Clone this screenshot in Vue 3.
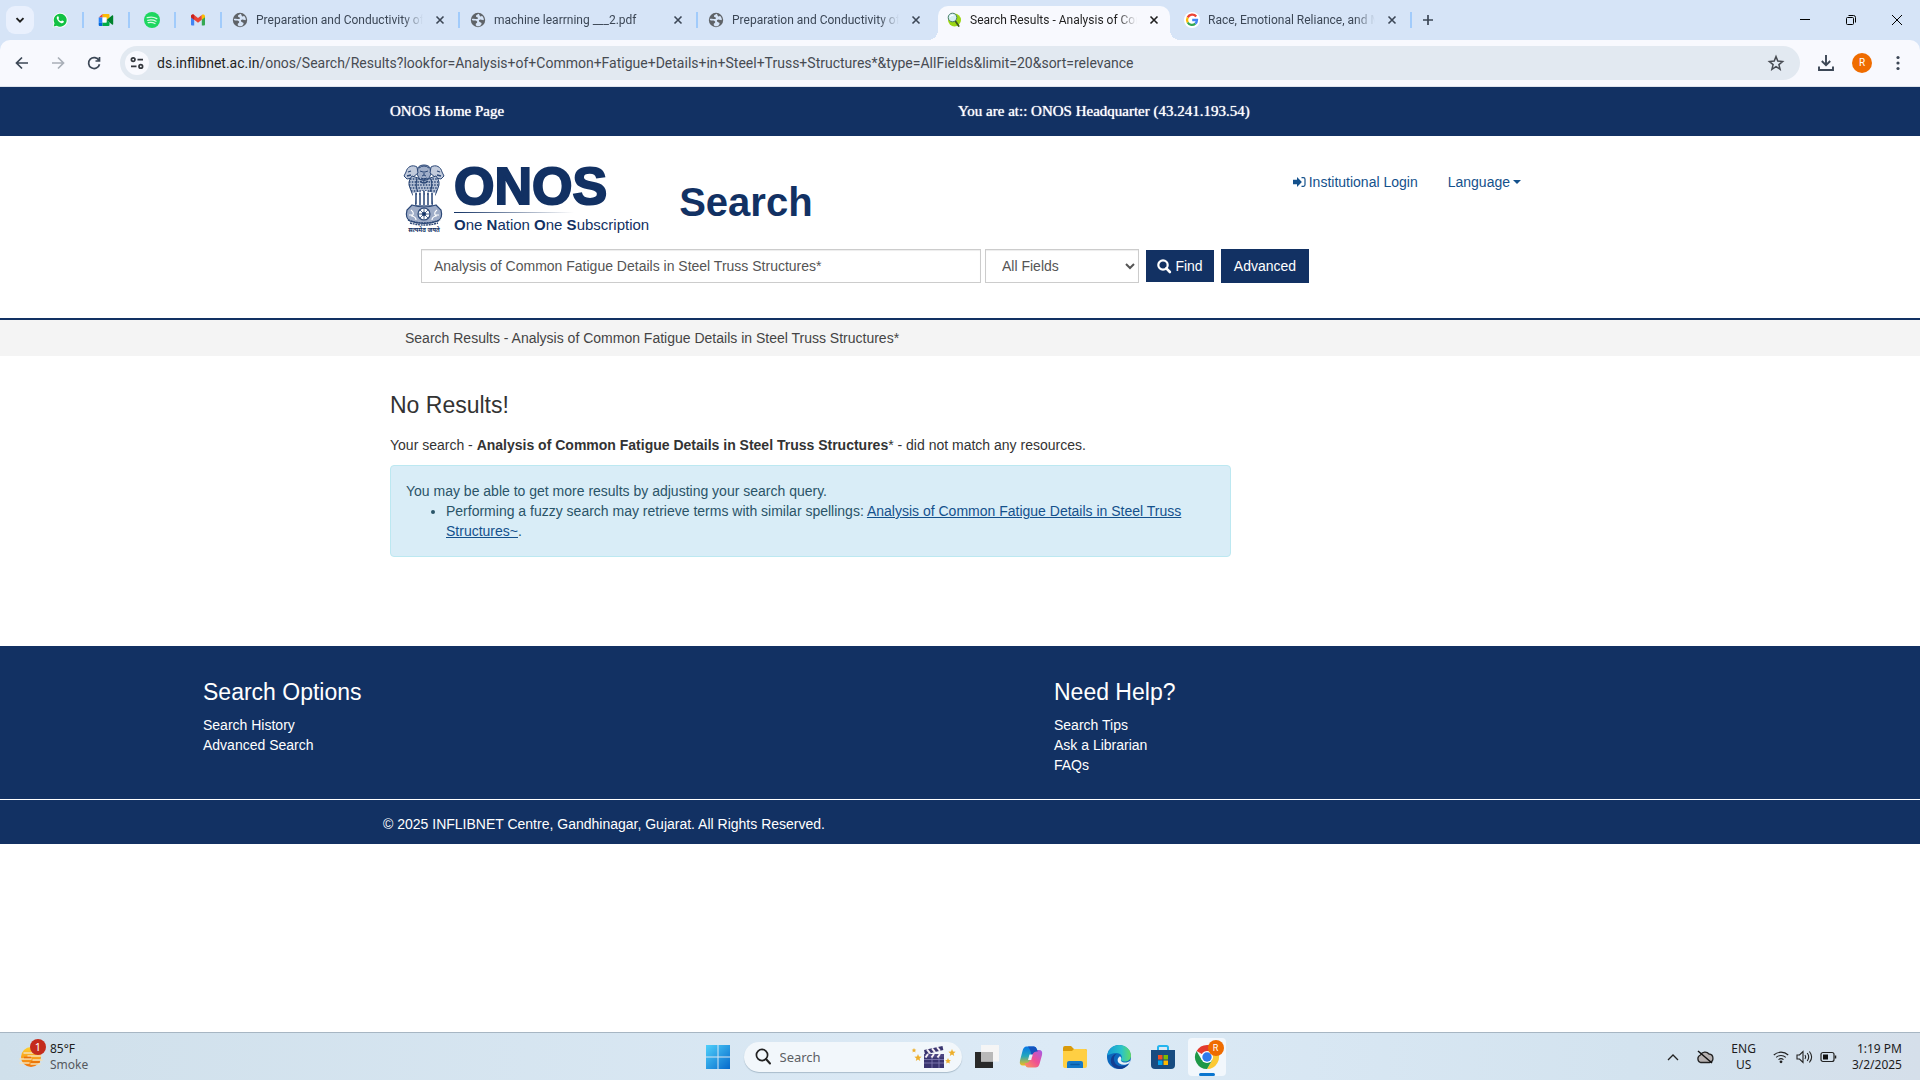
<script setup>
import { ref } from 'vue'

const query = ref('Analysis of Common Fatigue Details in Steel Truss Structures*')
const field = ref('All Fields')
const taskSearch = ref('')
const pinned = ['whatsapp', 'meet', 'spotify', 'gmail']
const tabs = [
  { icon: 'globe', title: 'Preparation and Conductivity of', sep: true },
  { icon: 'globe', title: 'machine learrning ___2.pdf', sep: true },
  { icon: 'globe', title: 'Preparation and Conductivity of', sep: false },
  { icon: 'vufind', title: 'Search Results - Analysis of Com', active: true, sep: false },
  { icon: 'google', title: 'Race, Emotional Reliance, and M', sep: true }
]
const address = '/onos/Search/Results?lookfor=Analysis+of+Common+Fatigue+Details+in+Steel+Truss+Structures*&type=AllFields&limit=20&sort=relevance'
</script>

<template>
  <div class="screen">
    <header class="browser">
      <div class="strip">
        <button class="tab-search" aria-label="Search tabs">
          <svg width="12" height="12" viewBox="0 0 12 12"><path d="M2.5 4.2 6 7.7l3.5-3.5" fill="none" stroke="#1f1f1f" stroke-width="1.9" /></svg>
        </button>
        <div v-for="name in pinned" :key="name" class="pin">
          <svg v-if="name === 'whatsapp'" width="16" height="16" viewBox="0 0 16 16">
            <path d="M.6 15.6 1.7 11.6A7.4 7.4 0 1 1 4.4 14.5z" fill="#fff" />
            <path d="M1.6 14.6 2.5 11.3A6.5 6.5 0 1 1 4.8 13.7z" fill="#12c143" />
            <path d="M5.7 4.3c-.9.4-1.2 1.4-.8 2.4.7 1.8 2.1 3.300 4 4.200 1.300.6 2.400.2 2.900-.9.200-.5 0-.7-.4-.9l-1.200-.6c-.4-.1-.6.6-1 .8C8 8.900 6.900 7.900 6.400 6.900c.2-.4.7-.6.6-1l-.6-1.400c-.1-.3-.4-.3-.7-.2z" fill="#fff" />
          </svg>
          <svg v-else-if="name === 'meet'" width="16" height="16" viewBox="0 0 16 16">
            <path d="M4.500 2H10.500A1 1 0 0 1 11.500 3V6L8.500 8V5.500H4.500z" fill="#fbbc04" />
            <path d="M4.500 2V5.500H.7z" fill="#ea4335" />
            <path d="M.7 5.500H4.500V10.500H.7z" fill="#2684fc" />
            <path d="M.7 10.500H4.500V14H1.700a1 1 0 0 1-1-1z" fill="#0066da" />
            <path d="M4.500 10.500H8.500V8l3 2.500V13a1 1 0 0 1-1 1H4.500z" fill="#00ac47" />
            <path d="M8.500 8 14 3.500c.6-.4 1.200-.2 1.200.5v8c0 .7-.6 1-1.200.5z" fill="#00832d" />
            <path d="M4.500 5.500H8.500V10.500H4.500z" fill="#fff" />
          </svg>
          <svg v-else-if="name === 'spotify'" width="16" height="16" viewBox="0 0 16 16">
            <circle cx="8" cy="8" r="8" fill="#1ed760" />
            <path d="M3.200 5.700C6.500 4.700 10 5 12.800 6.600M3.700 8.300C6.500 7.500 9.500 7.800 12 9.200M4.200 10.700c2.300-.6 4.700-.4 6.800.8" fill="none" stroke="#d9f9e4" stroke-width="1.300" stroke-linecap="round" />
          </svg>
          <svg v-else width="16" height="16" viewBox="0 0 16 16">
            <path d="M1 4V12.500a1 1 0 0 0 1 1H4.200V6z" fill="#4285f4" />
            <path d="M15 4V12.500a1 1 0 0 1-1 1H11.800V6z" fill="#34a853" />
            <path d="M1 4.500C1 2.500 3 2 4.200 3L8 5.900 11.800 3V7.800L8 10.700 4.200 7.800 1 5.300z" fill="#ea4335" />
            <path d="M11.800 3C13 2 15 2.500 15 4.500v.8L11.800 7.800z" fill="#fbbc04" />
            <path d="M1 4.500C1 2.500 3 2 4.200 3v4.800L1 5.300z" fill="#c5221f" />
          </svg>
        </div>
        <div v-for="(tab, i) in tabs" :key="i" class="tab" :class="{ active: tab.active, sep: tab.sep }">
          <svg v-if="tab.icon === 'globe'" width="16" height="16" viewBox="0 0 16 16">
            <circle cx="8" cy="8" r="7.200" fill="#5f6368" />
            <path d="M8.500 1.800c-1.400 1-3 1.500-2.500 2.800.4 1 2 .4 1.900 1.600-.1 1-1.600.8-2.800.8-1.300 0-2.600-.6-3.300.2.2 1.500 1.400 1.300 2.800 1.300 1.500 0 2.700.5 2.600 1.700-.1 1-1.500.9-1.500 2 0 1 .7 1.700 1.400 2.100 2.900.2 4.500-1.500 4.500-2.900 0-1.200-1.700-.9-2.500-2-.7-1.100.4-2 1.700-1.900 1.200.1 1.800 1 3 .6.1-2.200-.8-3.400-1.900-4.300-.6.6-1 .8-1.700.4-.8-.5-.6-1.700-1.700-2.400z" fill="#d6e4f7" />
          </svg>
          <svg v-else-if="tab.icon === 'vufind'" width="16" height="16" viewBox="0 0 16 16">
            <circle cx="8.500" cy="8" r="6.500" fill="#9bd614" />
            <path d="M9 8.500 12.700 14" stroke="#3f5a1d" stroke-width="1.800" stroke-linecap="round" />
            <circle cx="6.500" cy="5.500" r="4.300" fill="#d5f0f2" stroke="#477d69" stroke-width="1" />
            <path d="M4 5.200c.5-1.700 2.200-2.200 3.500-1.700" stroke="#fff" stroke-width="1.200" fill="none" />
          </svg>
          <svg v-else width="16" height="16" viewBox="0 0 16 16">
            <circle cx="8" cy="8" r="8" fill="#fff" />
            <g fill="none" stroke-width="2.300">
              <path d="M12.200 4.500A5 5 0 0 0 3.700 5.500" stroke="#ea4335" />
              <path d="M3.700 5.500a5 5 0 0 0 0 5" stroke="#fbbc04" />
              <path d="M3.700 10.500a5 5 0 0 0 7.600 1.200" stroke="#34a853" />
              <path d="M11.300 11.700A5 5 0 0 0 13 8H8.200" stroke="#4285f4" />
            </g>
          </svg>
          <span class="tab-title">{{ tab.title }}</span>
          <button class="close" aria-label="Close tab">
            <svg width="10" height="10" viewBox="0 0 10 10"><path d="m1.500 1.500 7 7m0-7-7 7" stroke="currentColor" stroke-width="1.600" /></svg>
          </button>
        </div>
        <button class="new-tab" aria-label="New tab">
          <svg width="12" height="12" viewBox="0 0 12 12"><path d="M6 1v10M1 6h10" stroke="#3c4756" stroke-width="1.700" /></svg>
        </button>
        <div class="window-controls">
          <button aria-label="Minimize"><svg width="10" height="10" viewBox="0 0 10 10"><path d="M0 4.500h10" stroke="#000" /></svg></button>
          <button aria-label="Restore"><svg width="10" height="10" viewBox="0 0 10 10"><g fill="none" stroke="#000"><rect x=".5" y="2.500" width="7" height="7" rx="1" /><path d="M2.500.5H7.500a2 2 0 0 1 2 2V7.500" /></g></svg></button>
          <button aria-label="Close"><svg width="10" height="10" viewBox="0 0 10 10"><path d="m0 0 10 10M10 0 0 10" stroke="#000" /></svg></button>
        </div>
      </div>
      <div class="toolbar">
        <button class="nav" aria-label="Back"><svg width="14" height="14" viewBox="0 0 14 14"><path d="M13 7H2M7 1.500 1.500 7 7 12.500" fill="none" stroke="#3c4756" stroke-width="1.700" /></svg></button>
        <button class="nav" aria-label="Forward"><svg width="14" height="14" viewBox="0 0 14 14"><path d="M1 7h11M7 1.500 12.500 7 7 12.500" fill="none" stroke="#a9afb8" stroke-width="1.700" /></svg></button>
        <button class="nav" aria-label="Reload"><svg width="14" height="14" viewBox="0 0 14 14"><path d="M12 4.500A5.500 5.500 0 1 0 12.500 8.200M12.500 1v4H8.500" fill="none" stroke="#3c4756" stroke-width="1.700" /></svg></button>
        <div class="omnibox">
          <button class="site" aria-label="Site information">
            <svg width="14" height="14" viewBox="0 0 14 14"><g fill="none" stroke="#33373d" stroke-width="1.700"><circle cx="3.200" cy="3.600" r="1.800" /><path d="M7.500 3.600H13M1 10.400H6.500" /><circle cx="10.800" cy="10.400" r="1.800" /></g></svg>
          </button>
          <span class="url"><span class="host">ds.inflibnet.ac.in</span>{{ address }}</span>
          <button class="star" aria-label="Bookmark">
            <svg width="16" height="16" viewBox="0 0 16 16"><path d="m8 1.600 1.800 4.500 4.800.4-3.700 3.100 1.200 4.700L8 11.700l-4.100 2.600 1.200-4.700L1.400 6.500l4.800-.4z" fill="none" stroke="#474b52" stroke-width="1.500" /></svg>
          </button>
        </div>
        <button class="tool" aria-label="Downloads"><svg width="16" height="16" viewBox="0 0 16 16"><path d="M8 0v10M3.800 6 8 10.200 12.200 6M1 11.500V15H15V11.500" fill="none" stroke="#3c4756" stroke-width="1.900" /></svg></button>
        <button class="tool" aria-label="Profile"><span class="avatar">R</span></button>
        <button class="tool" aria-label="Menu"><svg width="4" height="16" viewBox="0 0 4 16"><g fill="#3c4756"><circle cx="2" cy="2.500" r="1.600" /><circle cx="2" cy="8" r="1.600" /><circle cx="2" cy="13.500" r="1.600" /></g></svg></button>
      </div>
    </header>

    <div class="page">
      <div class="topbar">
        <div class="container topbar-row">
          <a href="#">ONOS Home Page</a>
          <span>You are at:: ONOS Headquarter (43.241.193.54)</span>
        </div>
      </div>
      <header class="masthead">
        <div class="container brand-row">
          <a class="logo" href="#" aria-label="ONOS">
            <svg class="emblem" width="42" height="70" viewBox="0 0 42 70">
              <g fill="none" stroke="#2c4877">
                <path d="M15 5C16 1 26 1 27 5l1 6-3 6h-8l-3-6z" fill="#a0aec8" stroke-width="1" />
                <path d="M16 5q5-4 10 0M17 8l3 1m2 0 3-1M21 8v4l-2 1m2-1 2 1M18 15q3 2 6 0" stroke-width="1" />
                <path d="M14 4C9 1 4 4 3 9l-2 4 3 3 5-1 6-5zM28 4c5-3 10 0 11 5l2 4-3 3-5-1-6-5z" fill="#c2cbdc" stroke-width="1" />
                <path d="M5 9l3-1M4 13l4-1M37 9l-3-1M38 13l-4-1" stroke-width="1.300" />
                <path d="M9 13q-5 6-2 12 2 6 4 9l2 9h16l2-9q2-3 4-9 3-6-2-12l-6 2q-6 5-12 0z" fill="#b3bfd4" stroke-width="1" />
                <path d="M14 16q-2 7 1 13M28 16q2 7-1 13M17 18q4 4 8 0" stroke-width="1.200" />
                <path d="M7 16h28M6 19h30M6 22h30M7 25h28M8 28h26M10 31h22" stroke-width="1.700" stroke-dasharray="1.500 1.300" />
                <path d="M11 30v11M15 29v13M19 28v14M23 28v14M27 29v13M31 30v11" stroke="#fff" stroke-width="2.200" />
                <path d="M13 30v11M17 30v12M21 28v14M25 30v12M29 30v11" stroke-width="1.300" />
                <path d="M9 42q12 4 24 0l5 5q2 8-3 11-14 5-28 0-5-3-3-11z" fill="#9eacc7" stroke-width="1.200" />
                <circle cx="21" cy="51" r="6" fill="#fff" stroke-width="1.200" />
                <path d="M21 45v12M15 51h12M17 47l8 8M25 47l-8 8" stroke-width=".8" />
                <circle cx="21" cy="51" r="1.800" fill="#123163" />
                <path d="M8 47q4 3 1 6 4 1 4 4M34 47q-4 3-1 6-4 1-4 4M6 52h3M33 52h3" stroke="#fff" stroke-width="1.200" />
                <path d="M5 57q16 6 32 0M7 60q14 4 28 0" stroke-width="1.400" stroke-dasharray="2 .7" />
              </g>
              <text x="21" y="69" text-anchor="middle" font-size="6" font-weight="700" fill="#123163" font-family="Noto Sans, FreeSans, sans-serif">सत्यमेव जयते</text>
            </svg>
            <span class="wordmark">
              <span class="onos">ONOS</span>
              <span class="rule"></span>
              <span class="tagline"><b>O</b>ne <b>N</b>ation <b>O</b>ne <b>S</b>ubscription</span>
            </span>
          </a>
          <h1>Search</h1>
          <nav class="account">
            <a href="#"><svg width="13" height="12" viewBox="0 0 13 12"><path d="M0 3.700h4V1L8.900 6 4 11V8.300H0z" fill="#14518c" /><path d="M8.500 1.700H10.500a1.500 1.500 0 0 1 1.500 1.500v5.600a1.500 1.500 0 0 1-1.500 1.500H8.500" fill="none" stroke="#14518c" stroke-width="1.200" /></svg>Institutional Login</a>
            <a href="#">Language<span class="caret"></span></a>
          </nav>
        </div>
        <div class="container">
          <form class="search" @submit.prevent>
            <input v-model="query" class="lookfor" type="text" aria-label="Search terms">
            <select v-model="field" aria-label="Search type"><option>All Fields</option></select>
            <button class="find" type="submit"><svg width="14" height="14" viewBox="0 0 14 14"><g fill="none" stroke="#fff"><circle cx="6" cy="6" r="4.700" stroke-width="2.200" /><path d="m9.300 9.300 3.600 3.700" stroke-width="2.600" stroke-linecap="round" /></g></svg>Find</button>
            <a class="advanced" href="#">Advanced</a>
          </form>
        </div>
      </header>
      <div class="breadcrumbs">
        <div class="container crumb">Search Results - Analysis of Common Fatigue Details in Steel Truss Structures*</div>
      </div>
      <main class="container results">
        <h2>No Results!</h2>
        <p>Your search - <strong>Analysis of Common Fatigue Details in Steel Truss Structures</strong>* - did not match any resources.</p>
        <div class="alert">
          You may be able to get more results by adjusting your search query.
          <ul>
            <li>Performing a fuzzy search may retrieve terms with similar spellings: <a href="#">Analysis of Common Fatigue Details in Steel Truss Structures~</a>.</li>
          </ul>
        </div>
      </main>
      <footer class="footer">
        <div class="footer-cols">
          <section>
            <h2>Search Options</h2>
            <a href="#">Search History</a>
            <a href="#">Advanced Search</a>
          </section>
          <section>
            <h2>Need Help?</h2>
            <a href="#">Search Tips</a>
            <a href="#">Ask a Librarian</a>
            <a href="#">FAQs</a>
          </section>
        </div>
        <div class="legal"><div class="container">© 2025 INFLIBNET Centre, Gandhinagar, Gujarat. All Rights Reserved.</div></div>
      </footer>
    </div>

    <div class="taskbar">
      <button class="weather">
        <span class="sun">
          <svg width="24" height="24" viewBox="0 0 24 24">
            <defs><linearGradient id="sun" x1="0" y1="0" x2="0" y2="1"><stop offset="0" stop-color="#ffd02e" /><stop offset="1" stop-color="#f1750b" /></linearGradient></defs>
            <circle cx="12" cy="12" r="10" fill="url(#sun)" />
            <path d="M5 8h9M9 11h13M1 14h11M14 15h9M1 18h9M12 19h9" stroke="#f5dfb4" stroke-width="1.500" stroke-linecap="round" />
            <path d="M5 12.500h7M12 17h9" stroke="#e87009" stroke-width="1.300" />
          </svg>
          <span class="count">1</span>
        </span>
        <span class="lines"><span>85°F</span><span class="dim">Smoke</span></span>
      </button>
      <div class="apps">
        <button class="app start" aria-label="Start">
          <svg width="24" height="24" viewBox="0 0 24 24"><defs><linearGradient id="win" x1="0" y1="0" x2="1" y2="1"><stop offset="0" stop-color="#4fd0fb" /><stop offset="1" stop-color="#0669cb" /></linearGradient></defs><path d="M0 0h11.500v11.500H0zM12.500 0H24v11.500H12.500zM0 12.500h11.500V24H0zM12.500 12.500H24V24H12.500z" fill="url(#win)" /></svg>
        </button>
        <label class="task-search">
          <svg width="16" height="17" viewBox="0 0 16 17"><g fill="none" stroke="#222"><circle cx="7" cy="7" r="5.600" stroke-width="1.700" /><path d="m11 11 4 4.500" stroke-width="2" stroke-linecap="round" /></g></svg>
          <input v-model="taskSearch" type="text" placeholder="Search" aria-label="Search the computer">
          <svg width="44" height="24" viewBox="0 0 44 24">
            <path d="M12 11h20v12H12z" fill="#39346f" /><path d="M12 14.500h20M12 18h20M20 11v12M27 11v12" stroke="#8580b7" stroke-width=".8" />
            <path d="m12 5 18.500-4 .8 4L13 9.500z" fill="#39346f" /><path d="m15 4.400 3 4M20 3.300l3 3.800M25 2.200l3 3.700" stroke="#f5edf3" stroke-width="2" />
            <path d="M12 9h20v3.500H12z" fill="#4d4683" /><path d="m16 9-2.500 3.500M22 9l-2.500 3.500M28 9l-2.500 3.500" stroke="#f5edf3" stroke-width="2" />
            <g fill="#edaf2d"><path d="m6 9 1 2.400 2.600.3-2 1.700.6 2.600L6 14.600 3.800 16l.6-2.600-2-1.700 2.600-.3zM40 4l1 2.400 2.600.3-2 1.700.6 2.600L40 9.600 37.800 11l.6-2.600-2-1.700 2.600-.3z" /><path d="m2 3 .7 1.600 1.600.2-1.200 1L3.500 7.500 2 6.500.5 7.500l.4-1.700-1.200-1 1.600-.2zM36 13l.9 2 2 .2-1.500 1.300.4 2L36 17.400l-1.800 1.100.4-2-1.500-1.300 2-.2z" /></g>
          </svg>
        </label>
        <button class="app" aria-label="Task view">
          <svg width="24" height="24" viewBox="0 0 24 24"><path d="M0 7h18v16H0z" fill="#292929" /><path d="M6 0h18v16.500H6z" fill="#f5f5f5" /><path d="M6 7h12v9.500H6z" fill="#b9b9b9" /></svg>
        </button>
        <button class="app" aria-label="Copilot">
          <svg width="24" height="24" viewBox="0 0 24 24">
            <defs>
              <linearGradient id="cpa" x1="0" y1="0" x2="0" y2="1"><stop offset="0" stop-color="#0877e8" /><stop offset=".5" stop-color="#22a7bd" /><stop offset="1" stop-color="#f4bd18" /></linearGradient>
              <linearGradient id="cpb" x1="1" y1="0" x2="0" y2="1"><stop offset="0" stop-color="#a25ce9" /><stop offset=".5" stop-color="#ef4f94" /><stop offset="1" stop-color="#fb9b57" /></linearGradient>
            </defs>
            <path d="M7.500 1.500H15q2 0 3 3l1 3h-2q-2 0-3 3l-2.500 7q-1 3-4 3H4q-4 0-3-5L3.500 6q1-4.500 4-4.500z" fill="url(#cpa)" />
            <path d="M16.500 22.500H9q-2 0-3-3l-.5-1.500H8q2 0 3-3l2.500-7q1-3 4-3H20q4 0 3 5l-2.500 9q-1 3.500-4 3.500z" fill="url(#cpb)" />
            <path d="M9 1.500h6q2 0 3 3l.8 2q-4-.5-5.300 3L12 13.500q1-7-3-12z" fill="#1353be" />
            <path d="M10.500 9.500h3.300l-1.600 5.500H9z" fill="#e6f0f8" />
          </svg>
        </button>
        <button class="app" aria-label="File Explorer">
          <svg width="24" height="24" viewBox="0 0 24 24"><path d="M0 3q0-2 2-2h6l3 3h11q2 0 2 2v4H0z" fill="#d99a0a" /><path d="M0 6h9l2-2h11q2 0 2 2v15q0 2-2 2H2q-2 0-2-2z" fill="#ffcf43" /><path d="M4 23v-5q0-2 2-2h12q2 0 2 2v5z" fill="#1478c8" /><path d="M8 19.500h8" stroke="#0a5aa3" stroke-width="1.600" stroke-linecap="round" /></svg>
        </button>
        <button class="app" aria-label="Edge">
          <svg width="24" height="24" viewBox="0 0 24 24">
            <defs><linearGradient id="edge" x1="0" y1="0" x2="1" y2="0"><stop offset="0" stop-color="#139bd6" /><stop offset=".6" stop-color="#2bc3c9" /><stop offset="1" stop-color="#63dc63" /></linearGradient></defs>
            <circle cx="12" cy="12" r="12" fill="#0c68bd" />
            <path d="M.2 10.500C1.500 4 6 0 12 0c7 0 12 5 12 10.500 0 4-3 6-6.500 6-3 0-4-1-3.500-2.200 2-2.500 0-6.300-4.500-6.300-4 0-7.500 1.500-9.300 2.500z" fill="url(#edge)" />
            <path d="M9.500 9C6 11 6 17 10 20c4 2.500 9 1 12.200-1.500C20 22 16 24 12.500 24 6 23.500 3 18.500 4 14c.7-3 3-5 5.500-5z" fill="#123e91" />
            <path d="M14 14.300c-.7 1.700 1 3.200 4 3.200 2 0 4-.7 5.200-1.800l-.7 2.300c-3 2-7 2.500-10 .6-2.500-2-2.500-5.600.5-7.400 1.200 1 1.500 2.200 1 3.100z" fill="#e6f0f8" />
          </svg>
        </button>
        <button class="app" aria-label="Microsoft Store">
          <svg width="24" height="24" viewBox="0 0 24 24"><path d="M7 7V2.500Q7 1 8.500 1h7Q17 1 17 2.500V7" fill="none" stroke="#24b5ef" stroke-width="2" /><path d="M0 5h24v15q0 4-4 4H4q-4 0-4-4z" fill="#174b80" /><path d="M7 10h4.500v4.500H7z" fill="#f25022" /><path d="M12.500 10H17v4.500h-4.500z" fill="#7fba00" /><path d="M7 15.500h4.500V20H7z" fill="#00a4ef" /><path d="M12.500 15.500H17V20h-4.500z" fill="#ffb900" /></svg>
        </button>
        <button class="app chrome" aria-label="Chrome">
          <svg width="24" height="24" viewBox="0 0 24 24"><path d="M12 12 1.600 6A12 12 0 0 1 22.400 6z" fill="#e33b2e" /><path d="M12 12V0a12 12 0 0 1 10.400 6H12z" fill="#e33b2e" /><path d="M22.400 6A12 12 0 0 1 12 24l5.200-9L12 6z" fill="#fcc934" /><path d="M1.600 6A12 12 0 0 0 12 24l5.200-9H6.800z" fill="#1e9847" /><circle cx="12" cy="12" r="6" fill="#fff" /><circle cx="12" cy="12" r="4.700" fill="#2f7bed" /></svg>
          <span class="app-badge">R</span>
        </button>
      </div>
      <div class="tray">
        <button aria-label="Hidden icons"><svg width="12" height="8" viewBox="0 0 12 8"><path d="m1 7 5-5 5 5" fill="none" stroke="#222" stroke-width="1.300" /></svg></button>
        <button aria-label="Cloud sync"><svg width="18" height="14" viewBox="0 0 18 14"><path d="M4.500 12.500a4 4 0 0 1 0-7.500 5 5 0 0 1 8.500-1 4.300 4.300 0 0 1 .5 8.500z" fill="#b6b1b1" stroke="#222" stroke-width="1.300" /><path d="m2 1 14 12" stroke="#111" stroke-width="1.500" /></svg></button>
        <button class="lines lang"><span>ENG</span><span>US</span></button>
        <button class="status" aria-label="Network, volume, battery">
          <svg width="16" height="14" viewBox="0 0 16 14"><g fill="none" stroke="#222" stroke-width="1.100"><path d="M.8 5a10.500 10.500 0 0 1 14.400 0M3.200 7.400a7 7 0 0 1 9.600 0M5.500 9.700a3.700 3.700 0 0 1 5 0" /></g><circle cx="8" cy="11.800" r="1.400" fill="#222" /></svg>
          <svg width="17" height="14" viewBox="0 0 17 14"><g fill="none" stroke="#222" stroke-width="1.100"><path d="M1 5h2.500L7 1.500v11L3.500 9H1z" /><path d="M9 5q1.500 2 0 4M11.200 3q3 4 0 8M13.400 1.500q4.500 5.500 0 11" /></g></svg>
          <svg width="17" height="12" viewBox="0 0 17 12"><rect x="1" y="1.500" width="13" height="9" rx="2" fill="none" stroke="#222" stroke-width="1.200" /><path d="M3 3.500h5v5H3z" fill="#111" /><path d="M15.500 4.500v3" stroke="#222" stroke-width="1.500" /></svg>
        </button>
        <button class="lines clock"><span>1:19 PM</span><span>3/2/2025</span></button>
      </div>
    </div>
  </div>
</template>

<style>
body { margin: 0; background: #fff; }
</style>

<style scoped>
* { box-sizing: border-box; }
button { border: 0; padding: 0; margin: 0; background: none; font: inherit; color: inherit; }
svg { display: block; flex: none; overflow: visible; }
h1, h2, p, ul { margin: 0; }
a { text-decoration: none; }

.screen { min-height: 100vh; display: flex; flex-direction: column; }
.browser { font-family: Roboto, sans-serif; }
.taskbar { font-family: "Noto Sans", "Open Sans", sans-serif; }

/* Browser chrome */
.browser { background: #d6e4f7; }
.strip { height: 40px; display: flex; align-items: center; }
.tab-search { width: 28px; height: 28px; margin: 0 3px 0 6px; border-radius: 9px; background: #e9f0fd; display: grid; place-items: center; }
.pin { position: relative; width: 46px; height: 40px; display: grid; place-items: center; }
.pin::after, .tab.sep::after { content: ""; position: absolute; right: -1px; top: 12px; width: 2px; height: 16px; background: #a1cbfb; }
.tab { position: relative; width: 238px; height: 40px; flex: 0 1 238px; padding: 0 11px; display: flex; align-items: center; color: #3c4756; font-size: 12px; }
.tab-title { flex: 1; min-width: 0; margin-left: 8px; white-space: nowrap; overflow: hidden; line-height: 20px; mask-image: linear-gradient(to right, #000 calc(100% - 20px), transparent); }
.close { width: 16px; height: 16px; margin-left: 9px; display: grid; place-items: center; }
.tab.active { height: 34px; align-self: flex-end; padding-bottom: 6px; color: #1f1f1f; }
.tab.active > * { position: relative; }
.tab.active::before { content: ""; position: absolute; left: 3px; right: 3px; top: 0; bottom: 0; background: #f8f9fe; border-radius: 10px 10px 0 0; }
.tab.active::after { content: ""; position: absolute; left: -7px; right: -7px; bottom: 0; height: 10px; background: radial-gradient(circle at 0 0, transparent 10px, #f8f9fe 10px) left / 10px 10px no-repeat, radial-gradient(circle at 100% 0, transparent 10px, #f8f9fe 10px) right / 10px 10px no-repeat; }
.new-tab { width: 34px; height: 28px; display: grid; place-items: center; }
.window-controls { margin-left: auto; display: flex; }
.window-controls button { width: 46px; height: 40px; display: grid; place-items: center; }
.toolbar { height: 47px; padding: 0 4px; display: flex; align-items: center; background: #f8f9fe; border-radius: 10px 10px 0 0; border-bottom: 1px solid #dde3ec; }
.nav, .tool { width: 36px; height: 34px; display: grid; place-items: center; }
.omnibox { flex: 1; min-width: 0; height: 34px; margin: 0 8px; padding: 0 16px 0 5px; display: flex; align-items: center; border-radius: 17px; background: #e2e9f1; }
.site { width: 24px; height: 24px; flex: none; border-radius: 50%; background: #f8f9fe; display: grid; place-items: center; }
.url { flex: 1; min-width: 0; margin-left: 8px; overflow: hidden; white-space: nowrap; font-size: 14px; line-height: 22px; color: #474b52; }
.host { color: #1f1f1f; }
.avatar { width: 20px; height: 20px; border-radius: 50%; background: #ef6c00; color: #fff; font: 10px/20px Roboto, sans-serif; text-align: center; }

/* Library page */
.page { flex: 1; font: 14px/20px "Liberation Sans", Arial, sans-serif; color: #333; background: #fff; }
.container { width: 100%; max-width: 1170px; margin: 0 auto; padding: 0 15px; }
.topbar { height: 49px; background: #123163; color: #fff; font-family: Georgia, "Liberation Serif", serif; font-size: 15px; text-shadow: 0 0 1px #fff; }
.topbar-row { display: grid; grid-template-columns: 568px 1fr; align-items: center; height: 48px; }
.topbar a { color: #fff; }
.masthead { height: 184px; border-bottom: 2px solid #123163; }
.brand-row { display: flex; align-items: flex-start; height: 113px; padding-top: 27px; }
.logo { display: flex; margin-left: 13px; color: #123163; }
.wordmark { display: flex; flex-direction: column; margin-left: 9px; }
.onos { font-size: 52px; line-height: 46px; font-weight: 700; -webkit-text-stroke: 2px #123163; }
.rule { width: 120px; height: 1px; margin: 3px 0; background: linear-gradient(to right, #123163, #fff); }
.tagline { font-size: 15px; line-height: 18px; }
h1 { margin: 17px 0 0 30px; font-size: 40px; line-height: 44px; color: #123163; }
.account { display: flex; gap: 30px; margin: 9px 9px 0 auto; }
.account a { display: flex; align-items: center; gap: 3px; color: #14518c; }
.caret { border: 4px solid transparent; border-top-color: #14518c; border-bottom: 0; }
.search { display: flex; align-items: center; margin-left: 31px; }
.lookfor, select { height: 34px; border: 1px solid #ccc; border-radius: 0; background: #fff; box-shadow: inset 0 1px 1px rgba(0, 0, 0, .075); color: #555; font: inherit; }
.lookfor { width: 560px; padding: 0 12px; }
select { width: 154px; margin-left: 4px; padding: 0 0 0 12px; }
.find, .advanced { display: flex; align-items: center; justify-content: center; background: #123163; color: #fff; }
.find { width: 68px; height: 32px; margin: 0 7px; gap: 4px; }
.advanced { width: 88px; height: 34px; }
.breadcrumbs { padding: 8px 0; background: #f4f4f4; color: #444; }
.crumb { padding-left: 30px; }
.results { padding-top: 36px; padding-bottom: 89px; }
h2 { font-size: 23px; line-height: 26px; font-weight: 400; }
.results p { margin: 17px 0 10px; }
.alert { max-width: 841px; padding: 15px; border: 1px solid #bce8f1; border-radius: 4px; background: #d9edf7; color: #2a5468; }
.alert ul { padding-left: 40px; }
.alert a { color: #14518c; text-decoration: underline; }
.footer { background: #123163; color: #fff; }
.footer-cols { display: grid; grid-template-columns: 851px 1fr; padding: 33px 203px 24px; }
.footer h2 { margin-bottom: 10px; }
.footer a { display: block; color: #fff; }
.legal { border-top: 1px solid #fff; padding: 14px 0 10px; }
.legal .container { padding: 0 8px; }

/* Taskbar */
.taskbar { height: 48px; display: grid; grid-template-columns: 1fr auto 1fr; align-items: center; padding: 0 18px 0 19px; border-top: 1px solid #a7b6c3; background: linear-gradient(to right, #d0e0eb, #dceaf6 55%, #d3e3ef 85%, #d5dfea); color: #1d1d1d; font-size: 12px; line-height: 16px; }
.weather { display: flex; align-items: center; justify-self: start; }
.sun { position: relative; margin-right: 7px; }
.count { position: absolute; left: 11px; top: -6px; width: 16px; height: 16px; border-radius: 50%; background: #c42b1c; color: #fff; font-size: 11px; text-align: center; }
.lines { display: flex; flex-direction: column; text-align: left; }
.dim { color: #55595e; }
.apps { display: flex; align-items: center; margin-left: 3px; }
.app { position: relative; width: 38px; height: 38px; margin: 0 3px; display: grid; place-items: center; }
.task-search { width: 218px; height: 30px; margin: 0 3px 0 4px; padding: 0 6px 0 11px; display: flex; align-items: center; border-radius: 15px; background: #f2f7fb; box-shadow: 0 1px 1px #a9bccb; }
.task-search input { flex: 1; width: 0; min-width: 0; margin-left: 9px; border: 0; padding: 0; background: none; font: 13px/20px "Noto Sans", sans-serif; }
.task-search input::placeholder { color: #5c6064; opacity: 1; }
.chrome { background: #f2f7fc; border-radius: 4px; }
.chrome::after { content: ""; position: absolute; left: 11px; bottom: 0; width: 16px; height: 3px; border-radius: 2px; background: #0a75cf; }
.app-badge { position: absolute; right: 2px; top: 2px; width: 16px; height: 16px; border-radius: 50%; background: #ef6c00; color: #fff; font: 9px/16px Roboto, sans-serif; }
.tray { display: flex; align-items: center; justify-self: end; }
.tray > button:nth-child(2) { margin-left: 17px; }
.lang { margin-left: 17px; text-align: center; }
.status { display: flex; align-items: center; gap: 7px; margin-left: 17px; }
.clock { margin-left: 15px; text-align: right; }
</style>
